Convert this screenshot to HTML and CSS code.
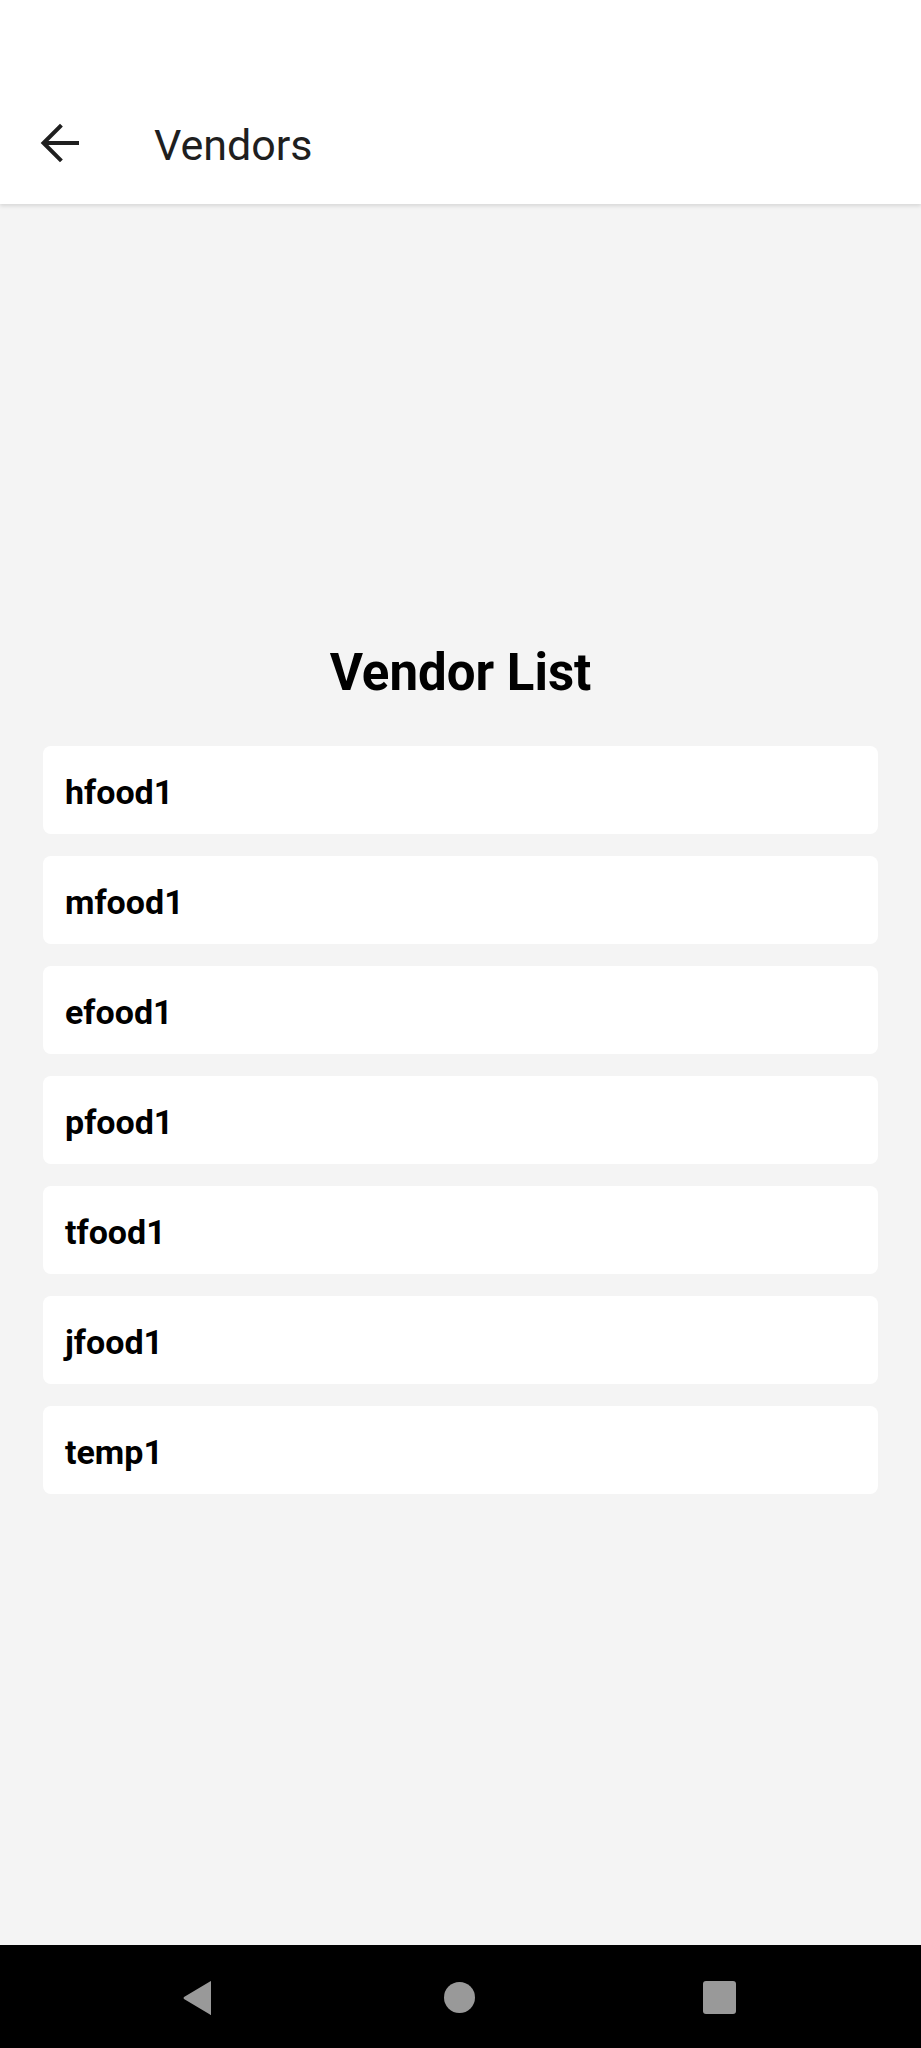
FILE: index.html
```html
<!DOCTYPE html>
<html>
<head>
<meta charset="utf-8">
<link rel="stylesheet" href="styles.css">
</head>
<body>
<div class="screen">
  <header class="appbar">
    <svg class="back" width="40" height="40" viewBox="0 0 40 40">
      <path d="M37 20H4.5M20 3.5L3.5 20L20 36.5" fill="none" stroke="#1f1f1f" stroke-width="4" stroke-linecap="square" stroke-linejoin="miter"/>
    </svg>
    <div class="appbar-title">Vendors</div>
  </header>
  <main class="content">
    <h1 class="list-title">Vendor List</h1>
    <ul class="vendors">
      <li class="vendor">hfood1</li>
      <li class="vendor">mfood1</li>
      <li class="vendor">efood1</li>
      <li class="vendor">pfood1</li>
      <li class="vendor">tfood1</li>
      <li class="vendor">jfood1</li>
      <li class="vendor">temp1</li>
    </ul>
  </main>
  <nav class="navbar">
    <svg class="nav-back" width="31" height="36" viewBox="0 0 31 36">
      <path d="M29 1.5 L29 34.5 Q29 35.5 28 34.5 L2 19 Q1 18 2 17 L28 1.5 Q29 0.5 29 1.5Z" fill="#999"/>
    </svg>
    <span class="nav-home"></span>
    <span class="nav-recent"></span>
  </nav>
</div>
</body>
</html>
```

FILE: styles.css
```css
* { box-sizing: border-box; }
html, body { margin: 0; padding: 0; }
body {
  font-family: Roboto, "Noto Sans", sans-serif;
  background: #f4f4f4;
}
.screen {
  width: 921px;
  height: 2048px;
  display: flex;
  flex-direction: column;
  background: #f4f4f4;
  overflow: hidden;
}
.appbar {
  height: 204px;
  flex: none;
  background: #fff;
  display: flex;
  align-items: center;
  padding: 88px 0 0 40px;
  box-shadow: 0 2px 4px rgba(0,0,0,0.12);
  position: relative;
  z-index: 1;
}
.back { flex: none; display: block; margin-top: -6px; }
.appbar-title {
  margin-left: 74px;
  font-size: 43px;
  color: #1f1f1f;
  margin-top: -2px;
}
.content {
  flex: 1;
  padding: 439px 43px 0;
}
.list-title {
  margin: 0;
  text-align: center;
  font-size: 51px;
  line-height: 60px;
  font-weight: 700;
  color: #000;
}
.vendors {
  list-style: none;
  margin: 43px 0 0;
  padding: 0;
  display: flex;
  flex-direction: column;
  gap: 22px;
}
.vendor {
  height: 88px;
  background: #fff;
  border-radius: 8px;
  padding: 3px 22px 0;
  display: flex;
  align-items: center;
  font-size: 34px;
  font-weight: 700;
  color: #000;
}
.navbar {
  height: 103px;
  flex: none;
  background: #000;
  display: flex;
  align-items: center;
  padding-top: 2px;
}
.nav-back { margin-left: 182px; display: block; }
.nav-home {
  width: 31px;
  height: 31px;
  border-radius: 50%;
  background: #999;
  margin-left: 231px;
}
.nav-recent {
  width: 33px;
  height: 33px;
  border-radius: 3px;
  background: #999;
  margin-left: 228px;
}
```
